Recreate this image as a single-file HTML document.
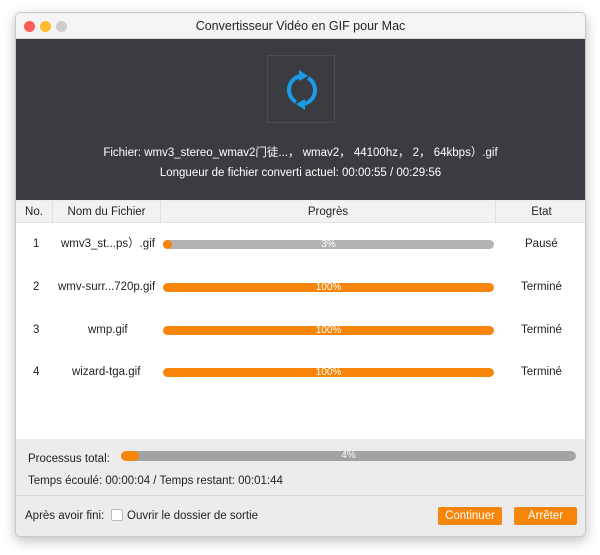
<!DOCTYPE html>
<html><head><meta charset="utf-8"><style>
*{box-sizing:border-box;margin:0;padding:0}
body{width:600px;height:555px;background:#fff;font-family:"Liberation Sans","Noto Sans CJK SC",sans-serif;font-size:11.5px;color:#222;position:relative;overflow:hidden}
.win{position:absolute;left:15px;top:12px;width:571px;height:525px;border:1px solid #c8c8c8;border-radius:5px;overflow:hidden;box-shadow:0 4px 12px rgba(0,0,0,.25);background:#ececec}
.title{height:26px;background:#f4f4f4;text-align:center;line-height:26px;font-size:12.5px;color:#222;border-bottom:1px solid #ddd;position:relative}
.dot{position:absolute;top:8px;width:11px;height:11px;border-radius:50%}
.dark{position:absolute;top:26px;left:0;right:0;height:161px;background:#3b3c41;color:#fff;text-align:center}
.ib{position:absolute;left:251px;top:16px;width:68px;height:68px;border:1px solid #4c4d52}
.t{position:absolute;white-space:nowrap;line-height:14px;height:14px}
.list{position:absolute;top:188px;left:0;right:0;height:238px;background:#fff}
.hd{height:22px;background:#f2f2f2;border-bottom:1px solid #e2e2e2;position:relative}
.hd div{position:absolute;top:0;height:22px;line-height:22px;text-align:center;border-right:1px solid #e0e0e0}
.bar{position:absolute;height:9px;border-radius:5px;background:#b3b3b3;color:#fff;font-size:10px;line-height:9px;text-align:center}
.fill{position:absolute;left:0;top:0;height:9px;border-radius:5px;background:#f7850a}
.btn{position:absolute;top:494px;height:18px;background:#f7850a;color:#fff;text-align:center;line-height:18px;font-size:11.5px;border-radius:2px}
</style></head><body>
<div class="win">
<div class="title"><span class="dot" style="left:8px;background:#fc5b57"></span><span class="dot" style="left:24px;background:#fdbc2e"></span><span class="dot" style="left:40px;background:#cdcdcd"></span>Convertisseur Vidéo en GIF pour Mac</div>
<div class="dark">
<div class="ib"><svg width="68" height="68" viewBox="0 0 68 68"><g fill="none" stroke="#1a9be6" stroke-width="4"><path d="M28 46 A14 14 0 0 1 33 20"/><path d="M40 22 A14 14 0 0 1 35 48"/></g><path d="M31 14 L40 20 L31 25Z" fill="#1a9be6"/><path d="M37 43 L28 48 L37 54Z" fill="#1a9be6"/></svg></div>
<div class="t" style="left:0;right:0;top:107px">Fichier: wmv3_stereo_wmav2门徒...， wmav2， 44100hz， 2， 64kbps）.gif</div>
<div class="t" style="left:0;right:0;top:127px">Longueur de fichier converti actuel: 00:00:55 / 00:29:56</div>
</div>
<div class="list">
<div class="hd"><div style="left:0;width:37px">No.</div><div style="left:37px;width:108px">Nom du Fichier</div><div style="left:145px;width:335px">Progrès</div><div style="left:480px;width:91px;border:none">Etat</div></div>
</div>
<div class="t" style="left:17px;top:224px">1</div><div class="t" style="left:45px;top:224px">wmv3_st...ps）.gif</div>
<div class="bar" style="left:147px;top:227px;width:331px"><div class="fill" style="width:9px"></div><span style="position:relative">3%</span></div>
<div class="t" style="left:509px;top:224px">Pausé</div>
<div class="t" style="left:17px;top:267px">2</div><div class="t" style="left:42px;top:267px">wmv-surr...720p.gif</div>
<div class="bar" style="left:147px;top:270px;width:331px;background:#f7850a">100%</div>
<div class="t" style="left:505px;top:267px">Terminé</div>
<div class="t" style="left:17px;top:310px">3</div><div class="t" style="left:72px;top:310px">wmp.gif</div>
<div class="bar" style="left:147px;top:313px;width:331px;background:#f7850a">100%</div>
<div class="t" style="left:505px;top:310px">Terminé</div>
<div class="t" style="left:17px;top:352px">4</div><div class="t" style="left:56px;top:352px">wizard-tga.gif</div>
<div class="bar" style="left:147px;top:355px;width:331px;background:#f7850a">100%</div>
<div class="t" style="left:505px;top:352px">Terminé</div>
<div class="t" style="left:12px;top:439px">Processus total:</div>
<div class="bar" style="left:105px;top:438px;width:455px;height:10px;background:#a3a3a3;line-height:10px"><div class="fill" style="width:18px;height:10px"></div><span style="position:relative">4%</span></div>
<div class="t" style="left:12px;top:461px">Temps écoulé: 00:00:04 / Temps restant: 00:01:44</div>
<div style="position:absolute;left:0;right:0;top:482px;border-top:1px solid #d8d8d8"></div>
<div class="t" style="left:9px;top:496px">Après avoir fini:</div>
<div style="position:absolute;left:95px;top:496px;width:12px;height:12px;background:#fff;border:1px solid #bbb;border-radius:2px"></div>
<div class="t" style="left:111px;top:496px">Ouvrir le dossier de sortie</div>
<div class="btn" style="left:422px;width:64px">Continuer</div>
<div class="btn" style="left:498px;width:63px">Arrêter</div>
</div>
</body></html>
